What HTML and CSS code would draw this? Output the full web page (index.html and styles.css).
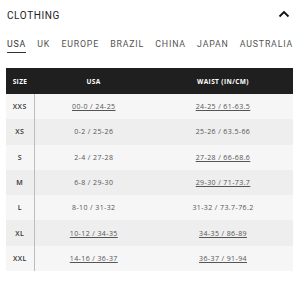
FILE: index.html
```html
<!DOCTYPE html>
<html>
<head>
<meta charset="utf-8">
<link rel="stylesheet" href="styles.css">
</head>
<body>
<div class="panel">
  <div class="head">
    <span class="title">CLOTHING</span>
    <svg class="chev" width="12" height="8" viewBox="0 0 12 8"><path d="M1.5 6.5 L6 2 L10.5 6.5" fill="none" stroke="#111" stroke-width="1.8"/></svg>
  </div>
  <div class="tabs">
    <span class="tab active">USA</span>
    <span class="tab">UK</span>
    <span class="tab">EUROPE</span>
    <span class="tab">BRAZIL</span>
    <span class="tab">CHINA</span>
    <span class="tab">JAPAN</span>
    <span class="tab">AUSTRALIA</span>
  </div>
  <table class="chart">
    <colgroup><col class="c1"><col class="c2"><col class="c3"></colgroup>
    <thead>
      <tr><th>SIZE</th><th>USA</th><th>WAIST (IN/CM)</th></tr>
    </thead>
    <tbody>
      <tr><td class="sz">XXS</td><td><u>00-0 / 24-25</u></td><td><u>24-25 / 61-63.5</u></td></tr>
      <tr><td class="sz">XS</td><td>0-2 / 25-26</td><td>25-26 / 63.5-66</td></tr>
      <tr><td class="sz">S</td><td>2-4 / 27-28</td><td><u>27-28 / 66-68.6</u></td></tr>
      <tr><td class="sz">M</td><td>6-8 / 29-30</td><td><u>29-30 / 71-73.7</u></td></tr>
      <tr><td class="sz">L</td><td>8-10 / 31-32</td><td>31-32 / 73.7-76.2</td></tr>
      <tr><td class="sz">XL</td><td><u>10-12 / 34-35</u></td><td><u>34-35 / 86-89</u></td></tr>
      <tr><td class="sz">XXL</td><td><u>14-16 / 36-37</u></td><td><u>36-37 / 91-94</u></td></tr>
    </tbody>
  </table>
</div>
</body>
</html>
```
FILE: styles.css
```css
html, body {
  margin: 0;
  padding: 0;
  background: #fff;
}
body {
  font-family: "Open Sans", "Liberation Sans", sans-serif;
  color: #222;
}
.panel {
  padding: 0 7px 0 6px;
}
.head {
  display: flex;
  justify-content: space-between;
  align-items: center;
  height: 30px;
  padding-left: 1px;
}
.title {
  font-family: Roboto, "Liberation Sans", sans-serif;
  font-size: 10px;
  letter-spacing: 0.6px;
  color: #222;
}
.chev {
  margin-right: 3px;
  margin-top: -2px;
}
.tabs {
  display: flex;
  justify-content: space-between;
  padding-left: 1px;
  height: 38px;
  align-items: flex-start;
  padding-top: 9px;
  box-sizing: border-box;
}
.tab {
  font-family: Roboto, "Liberation Sans", sans-serif;
  font-size: 8.8px;
  letter-spacing: 0.8px;
  color: #555;
  line-height: 11px;
  padding-bottom: 2px;
}
.tab.active {
  color: #333;
  border-bottom: 1.5px solid #333;
}
.chart {
  border-collapse: collapse;
  width: 287px;
  table-layout: fixed;
  font-size: 7px;
  letter-spacing: 0.4px;
}
.c1 { width: 28px; }
.c2 { width: 119px; }
.c3 { width: 140px; }
.chart th {
  background: #1f1f1f;
  color: #fff;
  height: 26px;
  padding: 0;
  font-weight: 700;
  font-size: 6.5px;
  text-align: center;
}
.chart td {
  height: 25.3px;
  padding: 0;
  text-align: center;
  color: #555;
}
.chart td.sz {
  color: #333;
  font-weight: 600;
  border-right: 1px solid #bdbdbd;
}
.chart tbody tr:nth-child(odd) {
  background: #f6f6f6;
}
.chart tbody tr:nth-child(even) {
  background: #eeeeee;
}
.chart u {
  text-decoration-thickness: 0.6px;
  text-underline-offset: 1px;
}
```
